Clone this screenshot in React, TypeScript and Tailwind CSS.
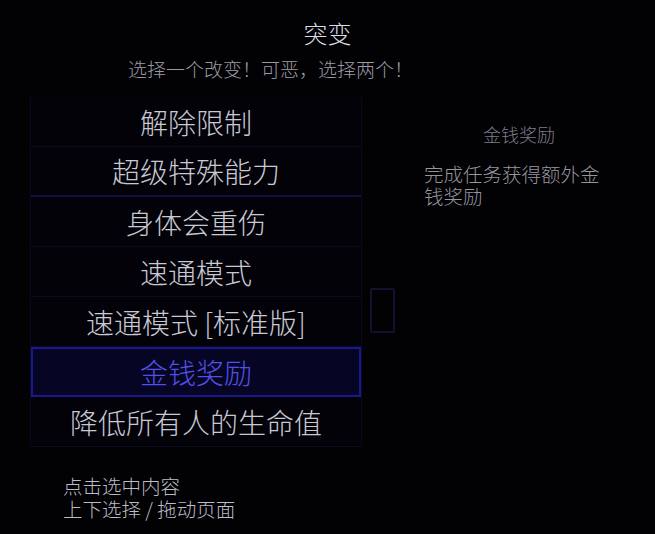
const options = [
  '解除限制',
  '超级特殊能力',
  '身体会重伤',
  '速通模式',
  '速通模式 [标准版]',
  '金钱奖励',
  '降低所有人的生命值',
];

const selected = 5;

const App = () => {
  return (
    <div
      className="w-[655px] h-[534px] bg-[#020104] text-[#c9c9d4] overflow-hidden"
      style={{ fontFamily: '"Noto Sans CJK SC", "Noto Sans", sans-serif' }}
    >
      <div className="pt-[17px] h-[49px] text-center text-[24px] leading-[32px] font-extralight text-[#dcdce4]">
        突变
      </div>
      <div className="mt-[8px] pl-[128px] text-[19px] leading-[24px] font-extralight text-[#9a9aa4]">
        选择一个改变！可恶，选择两个！
      </div>

      <div className="mt-[16px] flex">
        <div className="ml-[30px] w-[332px] flex flex-col bg-[#030209] border-l border-r border-[#09081c]">
          {options.map((label, i) => {
            const isSel = i === selected;
            return (
              <div
                key={label}
                className={
                  isSel
                    ? 'h-[50px] flex items-center justify-center border-2 border-[#1a1890] bg-[#060524] text-[#5250e6] text-[28px] font-extralight'
                    : i === 1
                    ? 'h-[50px] flex items-center justify-center border-b-2 border-[#121040] text-[28px] font-extralight'
                    : 'h-[50px] flex items-center justify-center border-b border-[#0b0a20] text-[28px] font-extralight'
                }
              >
                {label}
              </div>
            );
          })}
        </div>

        <div className="ml-[8px] w-[25px] flex flex-col">
          <div className="mt-[191px] h-[45px] border-2 border-[#121132] rounded-[2px]" />
        </div>

        <div className="ml-[29px] w-[190px] pt-[25px]">
          <div className="text-center text-[18px] leading-[24px] font-extralight text-[#7e7e88]">
            金钱奖励
          </div>
          <div className="mt-[17px] text-[19.5px] leading-[22px] font-extralight text-[#96969f]">
            完成任务获得额外金钱奖励
          </div>
        </div>
      </div>

      <div className="mt-[27px] pl-[63px] text-[19.5px] leading-[23px] font-extralight text-[#bcbcc6]">
        <div>点击选中内容</div>
        <div>上下选择 / 拖动页面</div>
      </div>
    </div>
  );
};

export default App;
